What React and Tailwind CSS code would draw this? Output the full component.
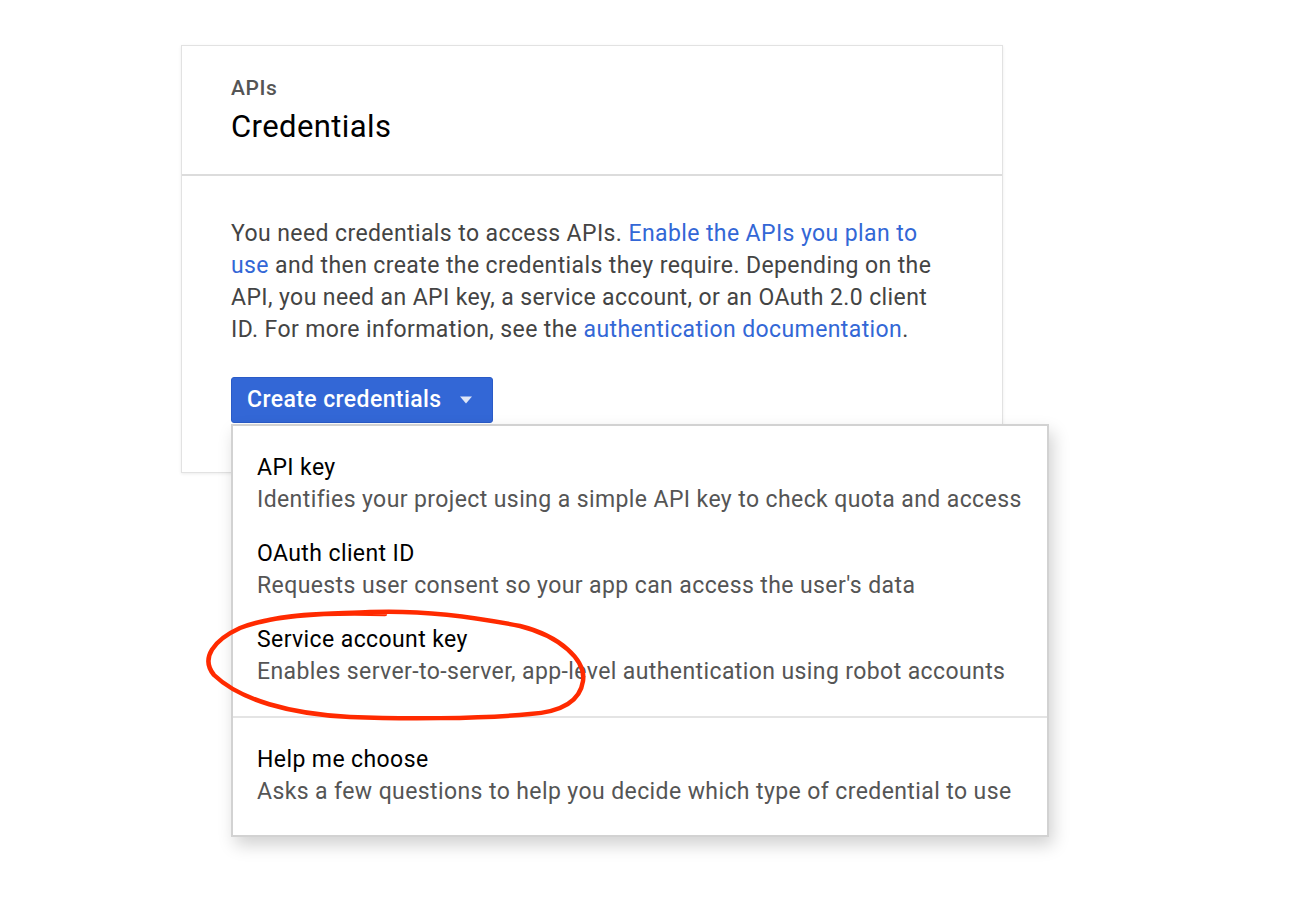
import React from "react";

const items = [
  { title: "API key", desc: "Identifies your project using a simple API key to check quota and access" },
  { title: "OAuth client ID", desc: "Requests user consent so your app can access the user's data" },
  { title: "Service account key", desc: "Enables server-to-server, app-level authentication using robot accounts" },
];

function MenuItem({ title, desc }) {
  return (
    <div className="px-[24px] text-[23px] leading-[32px] tracking-[0.4px]">
      <div className="text-black">{title}</div>
      <div className="text-[#555]">{desc}</div>
    </div>
  );
}

export default function App() {
  return (
    <div className="relative w-full h-[912px] bg-white font-['Roboto',sans-serif]">
      <div className="pt-[45px] pl-[181px]">
        <div className="w-[822px] bg-white border border-[#e2e2e2] shadow-[0_1px_3px_rgba(0,0,0,0.08)]">
          {/* header */}
          <div className="px-[49px] pt-[28px] pb-[27px] border-b-2 border-[#dcdcdc]">
            <div className="text-[21px] leading-[28px] font-medium tracking-[0.6px] text-[#555]">APIs</div>
            <div className="text-[31px] leading-[40px] tracking-[0.4px] text-black mt-[5px]">Credentials</div>
          </div>

          {/* body */}
          <div className="px-[49px] pt-[42px] pb-[49px]">
            <p className="w-[712px] text-[23px] leading-[32px] tracking-[0.4px] text-[#444]">
              You need credentials to access APIs.{" "}
              <a className="text-[#3367d6]">Enable the APIs you plan to use</a> and then create the
              credentials they require. Depending on the API, you need an API key, a service account,
              or an OAuth 2.0 client ID. For more information, see the{" "}
              <a className="text-[#3367d6]">authentication documentation</a>.
            </p>

            <div className="relative mt-[31px] w-fit">
              <button className="flex items-center h-[46px] pl-[15px] pr-[19px] bg-[#3367d6] border border-[#2a5bc7] rounded-[3px] text-white text-[23px] tracking-[0.4px] font-medium">
                Create credentials
                <svg width="14" height="8" viewBox="0 0 14 8" className="ml-[17px]">
                  <path d="M1 0.5h12L7 7.5z" fill="#dfe6f7" />
                </svg>
              </button>

              {/* dropdown */}
              <div className="absolute left-0 top-[47px] z-10 w-[818px] bg-white border-2 border-[#d2d2d2] shadow-[4px_8px_16px_rgba(0,0,0,0.18)]">
                <div className="flex flex-col gap-[22px] pt-[26px] pb-[28px]">
                  {items.map((it) => (
                    <MenuItem key={it.title} {...it} />
                  ))}
                </div>
                <div className="border-t-2 border-[#e4e4e4]" />
                <div className="pt-[26px] pb-[27px]">
                  <MenuItem
                    title="Help me choose"
                    desc="Asks a few questions to help you decide which type of credential to use"
                  />
                </div>
              </div>
            </div>
          </div>
        </div>
      </div>

      {/* hand-drawn annotation */}
      <svg className="absolute inset-0 z-20 pointer-events-none" width="1296" height="912">
        <path
          d="M260 622 C300 612 340 614 370 612 C420 610 470 616 520 626 C560 636 586 660 583 681 C580 702 560 712 530 714 C480 719 400 719 350 717 C290 714 240 700 214 675 C200 658 214 640 240 628 C270 616 320 612 385 614"
          fill="none"
          stroke="#ff2a00"
          strokeWidth="4.5"
          strokeLinecap="round"
          strokeLinejoin="round"
        />
      </svg>
    </div>
  );
}
